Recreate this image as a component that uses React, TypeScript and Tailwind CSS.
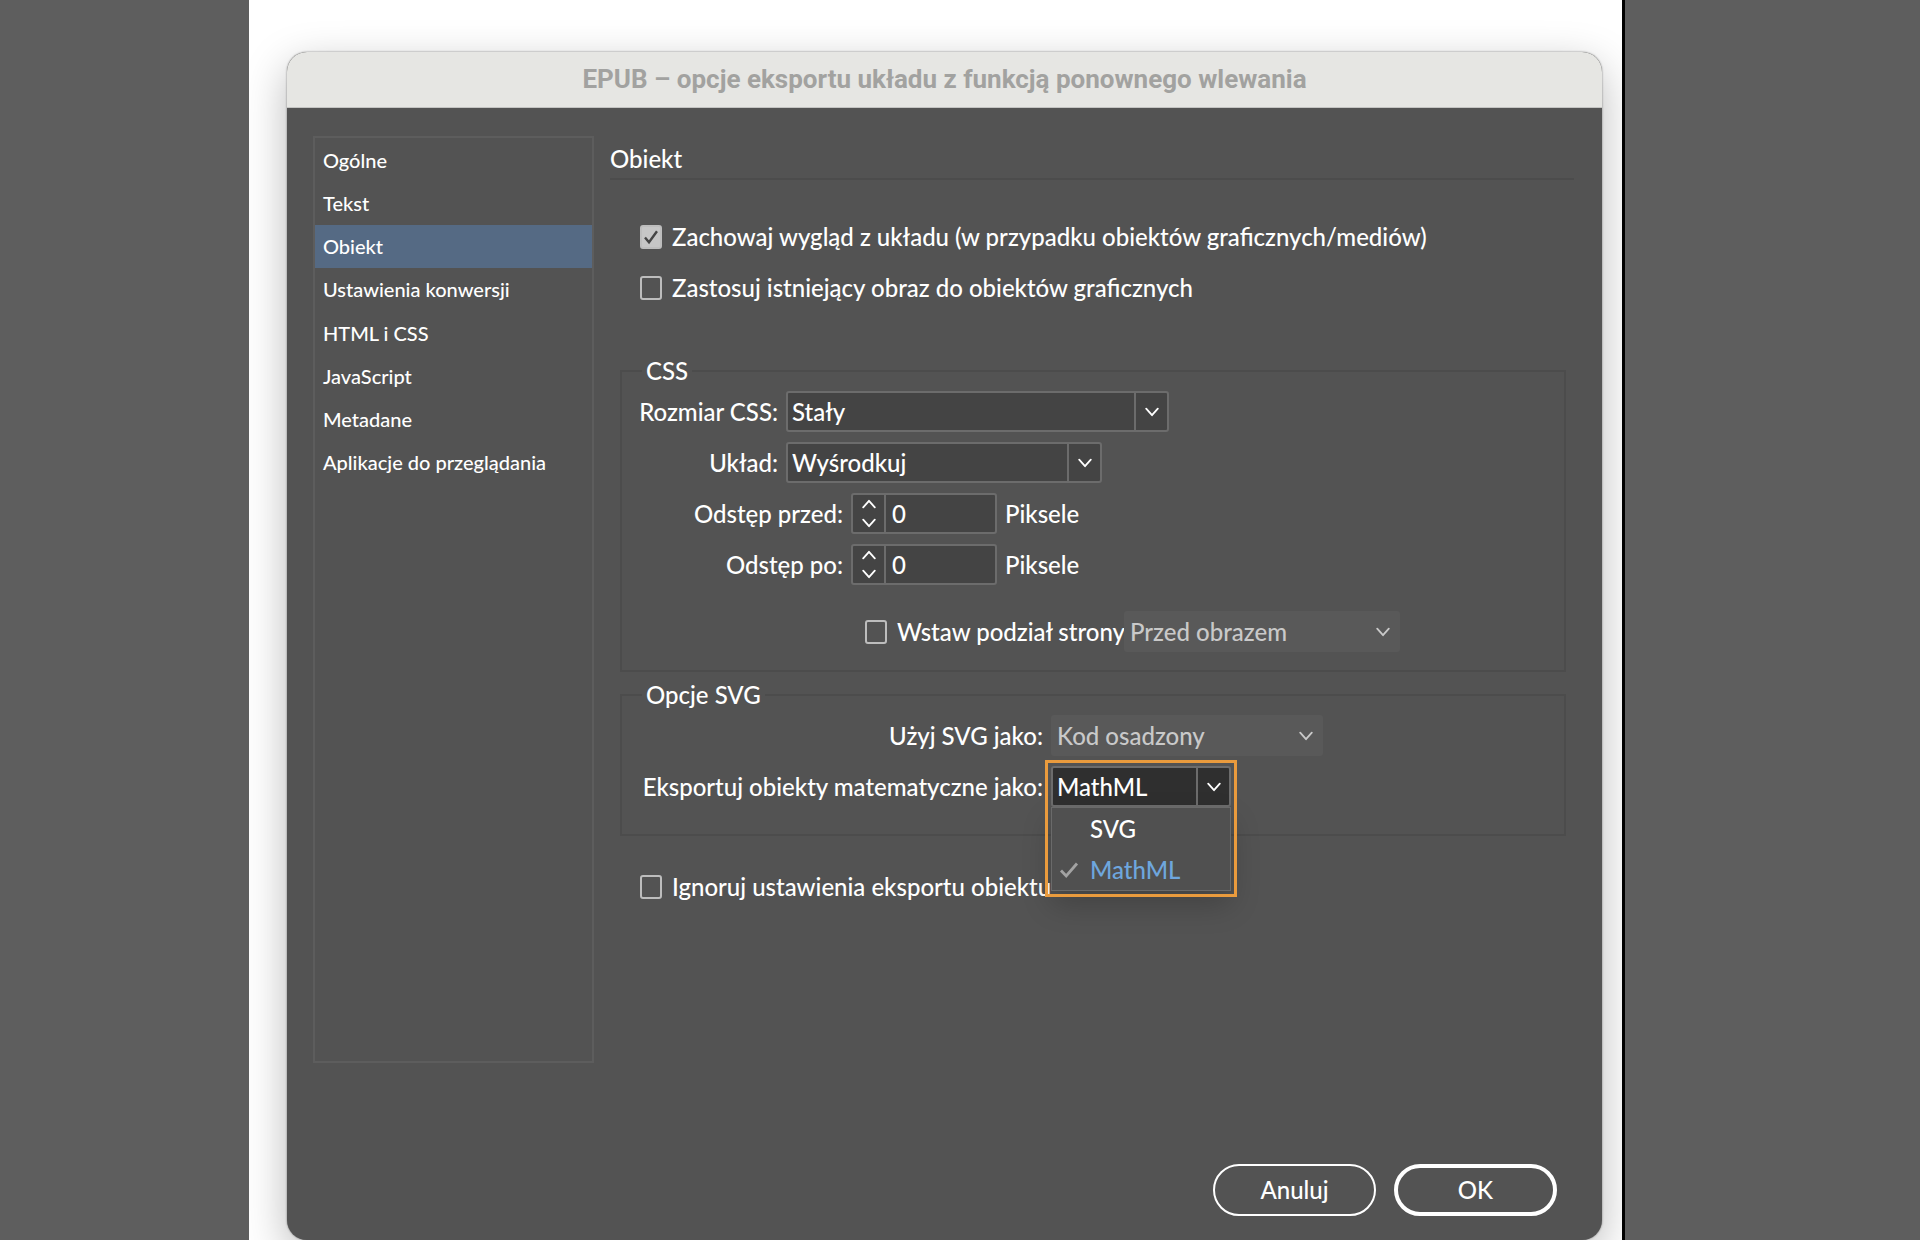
import React, { useState } from 'react'
import type { ReactNode } from 'react'

const sections = [
  'Ogólne',
  'Tekst',
  'Obiekt',
  'Ustawienia konwersji',
  'HTML i CSS',
  'JavaScript',
  'Metadane',
  'Aplikacje do przeglądania',
]

function Chevron({ className = '' }: { className?: string }) {
  return (
    <svg
      className={className}
      width="14"
      height="10"
      viewBox="0 0 14 10"
      fill="none"
      stroke="currentColor"
      strokeWidth="1.8"
      strokeLinecap="round"
      strokeLinejoin="round"
      aria-hidden="true"
    >
      <path d="M1.2 1.6 7 8.2l5.8-6.6" />
    </svg>
  )
}

function Checkbox({ id, label, defaultChecked }: { id: string; label: string; defaultChecked?: boolean }) {
  return (
    <div className="flex h-[41px] items-center gap-[10px]">
      <span className="grid shrink-0">
        <input
          id={id}
          type="checkbox"
          defaultChecked={defaultChecked}
          className="peer col-start-1 row-start-1 h-6 w-[22px] appearance-none rounded-[3px] border-2 border-[#bdbdbd] checked:bg-[#c6c6c6]"
        />
        <svg
          className="pointer-events-none invisible col-start-1 row-start-1 place-self-center text-[#454545] peer-checked:visible"
          width="16"
          height="16"
          viewBox="0 0 16 16"
          fill="none"
          stroke="currentColor"
          strokeWidth="2.4"
          aria-hidden="true"
        >
          <path d="M2 8.5 6 13.2 14 2.2" />
        </svg>
      </span>
      <label htmlFor={id} className="whitespace-nowrap">
        {label}
      </label>
    </div>
  )
}

function Select({ id, options, className }: { id: string; options: string[]; className: string }) {
  return (
    <div className={`grid h-[41px] ${className}`}>
      <select
        id={id}
        className="col-start-1 row-start-1 appearance-none rounded-[3px] border-2 border-[#6c6c6c] bg-[#444] pl-1"
      >
        {options.map((option) => (
          <option key={option}>{option}</option>
        ))}
      </select>
      <span className="pointer-events-none col-start-1 row-start-1 my-[2px] mr-[2px] flex w-[33px] items-center justify-center justify-self-end border-l-2 border-[#6c6c6c]">
        <Chevron />
      </span>
    </div>
  )
}

function DisabledSelect({ id, value, className }: { id: string; value: string; className: string }) {
  return (
    <div className={`grid h-[41px] text-[#c9c9c9] ${className}`}>
      <select
        id={id}
        disabled
        aria-label={value}
        className="col-start-1 row-start-1 appearance-none rounded-[3px] bg-[#595959] pl-[6px] opacity-100"
      >
        <option>{value}</option>
      </select>
      <Chevron className="pointer-events-none col-start-1 row-start-1 mr-[10px] self-center justify-self-end" />
    </div>
  )
}

function Stepper({ id }: { id: string }) {
  const [value, setValue] = useState(0)
  return (
    <div className="flex h-[41px] w-[146px] rounded-[3px] border-2 border-[#6c6c6c] bg-[#444]">
      <div className="flex w-[33px] shrink-0 flex-col items-center justify-between border-r-2 border-[#6c6c6c] py-1">
        <button type="button" aria-label="+" onClick={() => setValue(value + 1)}>
          <Chevron className="rotate-180" />
        </button>
        <button type="button" aria-label="-" onClick={() => setValue(Math.max(0, value - 1))}>
          <Chevron />
        </button>
      </div>
      <input
        id={id}
        value={value}
        onChange={(e) => setValue(Number(e.target.value) || 0)}
        className="w-full min-w-0 bg-transparent px-[6px] outline-none"
      />
    </div>
  )
}

function Field({ id, label, width, children }: { id: string; label: string; width: string; children: ReactNode }) {
  return (
    <div className="flex items-center gap-2">
      <label htmlFor={id} className={`flex shrink-0 justify-end whitespace-nowrap ${width}`}>
        {label}
      </label>
      {children}
    </div>
  )
}

function MathSelect({ id }: { id: string }) {
  const [value, setValue] = useState('MathML')
  return (
    <div className="relative w-[180px]">
      <div className="grid h-[41px]">
        <select
          id={id}
          value={value}
          onChange={(e) => setValue(e.target.value)}
          className="col-start-1 row-start-1 appearance-none rounded-[3px] border-2 border-[#6c6c6c] bg-[#2f2f2f] pl-1"
        >
          <option>SVG</option>
          <option>MathML</option>
        </select>
        <span className="pointer-events-none col-start-1 row-start-1 my-[2px] mr-[2px] flex w-[33px] items-center justify-center justify-self-end border-l-2 border-[#6c6c6c]">
          <Chevron />
        </span>
      </div>
      <ul
        role="listbox"
        aria-labelledby={id}
        className="absolute inset-x-0 top-full z-10 border border-[#6a6a6a] bg-[#505050] shadow-[0_14px_30px_rgba(0,0,0,0.2)]"
      >
        {['SVG', 'MathML'].map((option) => (
          <li
            key={option}
            role="option"
            aria-selected={option === value}
            onClick={() => setValue(option)}
            className="flex h-[41px] items-center pl-[7px] aria-selected:text-[#6ea6dd]"
          >
            <span className="w-[31px] text-[#a3a3a3]">
              {option === value && (
                <svg width="20" height="18" viewBox="0 0 20 18" fill="none" stroke="currentColor" strokeWidth="2.8" aria-hidden="true">
                  <path d="M2 9.5 7.2 15 18 2.5" />
                </svg>
              )}
            </span>
            {option}
          </li>
        ))}
      </ul>
      <div className="pointer-events-none absolute -inset-x-[6px] -top-[6px] z-20 h-[137px] border-3 border-[#ea9b3d]" />
    </div>
  )
}

export default function App() {
  const [active, setActive] = useState('Obiekt')

  return (
    <div className="grid min-h-screen grid-cols-[249fr_1376fr_295fr] bg-[#5e5e5e] font-[Lato,'Noto_Sans',sans-serif] text-[24px] leading-[30px] font-medium text-white">
      <div className="col-start-2 flex flex-col overflow-hidden border-r-[3px] border-black bg-white pt-[52px] pr-5 pl-[38px]">
        <div className="flex flex-1 flex-col overflow-hidden rounded-[20px] bg-[#535353] shadow-[0_0_2px_rgba(0,0,0,0.5),0_14px_44px_rgba(0,0,0,0.28)]">
          <h1 className="flex h-14 items-center justify-center border-b border-[#c4c4c2] bg-[#e6e6e3] pb-[2px] font-[Roboto,sans-serif] text-[26px] font-bold text-[#a2a2a0]">
            EPUB – opcje eksportu układu z funkcją ponownego wlewania
          </h1>

          <div className="flex flex-1 gap-4 pt-7 pr-7 pl-[26px]">
            <nav className="w-[281px] shrink-0 border-2 border-[#5d5d5d] text-[20px]">
              <ul className="grid h-[346px] auto-rows-fr">
                {sections.map((name) => (
                  <li key={name} className="flex">
                    <button
                      type="button"
                      aria-pressed={name === active}
                      onClick={() => setActive(name)}
                      className="flex-1 pl-2 text-left whitespace-nowrap aria-pressed:bg-[#556a84]"
                    >
                      {name}
                    </button>
                  </li>
                ))}
              </ul>
            </nav>

            <main className="min-w-0 flex-1">
              <h2 className="mt-2 h-9 border-b-2 border-[#4c4c4c]">Obiekt</h2>

              <div className="mt-9 ml-[30px] flex flex-col gap-[10px]">
                <Checkbox id="keep" label="Zachowaj wygląd z układu (w przypadku obiektów graficznych/mediów)" defaultChecked />
                <Checkbox id="existing" label="Zastosuj istniejący obraz do obiektów graficznych" />
              </div>

              <fieldset className="mt-12 mr-2 ml-[10px] border-2 border-[#4c4c4c] px-4 pt-[5px] pb-[18px]">
                <legend className="ml-1 px-1">CSS</legend>
                <div className="flex flex-col gap-[10px]">
                  <Field id="size" label="Rozmiar CSS:" width="w-[140px]">
                    <Select id="size" options={['Stały']} className="w-[383px]" />
                  </Field>
                  <Field id="align" label="Układ:" width="w-[140px]">
                    <Select id="align" options={['Wyśrodkuj']} className="w-[316px]" />
                  </Field>
                  <Field id="before" label="Odstęp przed:" width="w-[205px]">
                    <Stepper id="before" />
                    <span>Piksele</span>
                  </Field>
                  <Field id="after" label="Odstęp po:" width="w-[205px]">
                    <Stepper id="after" />
                    <span>Piksele</span>
                  </Field>
                </div>
                <div className="mt-[26px] ml-[227px] flex">
                  <div className="w-[259px]">
                    <Checkbox id="break" label="Wstaw podział strony" />
                  </div>
                  <DisabledSelect id="break-at" value="Przed obrazem" className="w-[276px]" />
                </div>
              </fieldset>

              <fieldset className="mt-2 mr-2 ml-[10px] border-2 border-[#4c4c4c] px-4 pt-[5px] pb-[27px]">
                <legend className="ml-1 px-1">Opcje SVG</legend>
                <div className="flex flex-col gap-[10px]">
                  <Field id="svg-as" label="Użyj SVG jako:" width="w-[405px]">
                    <DisabledSelect id="svg-as" value="Kod osadzony" className="w-[272px]" />
                  </Field>
                  <Field id="math-as" label="Eksportuj obiekty matematyczne jako:" width="w-[405px]">
                    <MathSelect id="math-as" />
                  </Field>
                </div>
              </fieldset>

              <div className="mt-[30px] ml-[30px]">
                <Checkbox id="ignore" label="Ignoruj ustawienia eksportu obiektu" />
              </div>
            </main>
          </div>

          <div className="flex justify-end gap-[18px] pt-[101px] pr-[45px] pb-6">
            <button type="button" className="h-[52px] w-[163px] rounded-full border-2 border-white">
              Anuluj
            </button>
            <button type="button" className="h-[52px] w-[163px] rounded-full border-4 border-white">
              OK
            </button>
          </div>
        </div>
      </div>
    </div>
  )
}
